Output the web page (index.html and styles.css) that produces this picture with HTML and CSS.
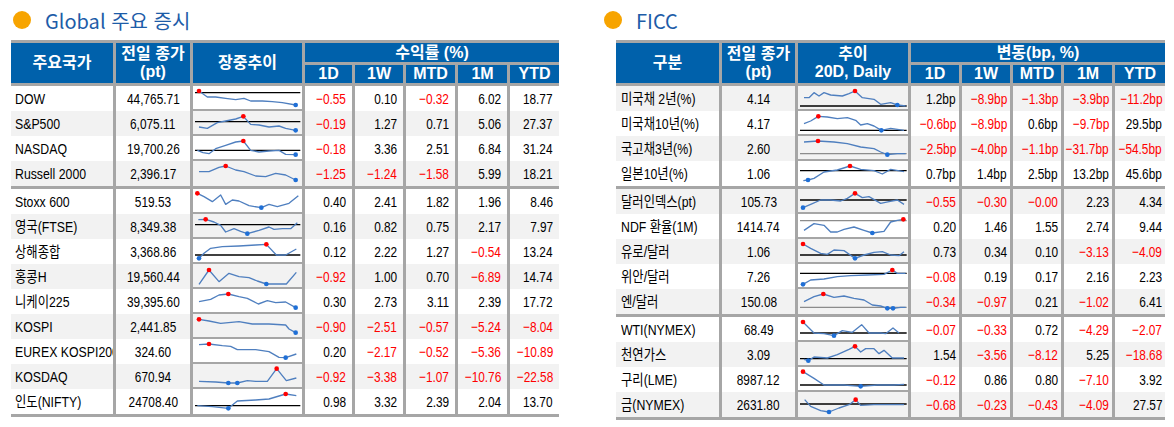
FILE: index.html
```html
<!DOCTYPE html>
<html lang="ko">
<head>
<meta charset="utf-8">
<title>Global 주요 증시 / FICC</title>
<link rel="stylesheet" href="styles.css">
</head>
<body>
<div class="page">
  <section class="panel panel-left">
    <div class="title"><span class="dot"></span><span>Global 주요 증시</span></div>
    <table class="tbl tbl-l">
      <colgroup><col class="c1"><col class="c2"><col class="c3"><col class="c4"><col class="c5"><col class="c6"><col class="c7"><col class="c8"></colgroup>
      <thead>
        <tr class="r1"><th rowspan="2" class="first">주요국가</th><th rowspan="2" class="two">전일 종가<br>(pt)</th><th rowspan="2">장중추이</th><th colspan="5">수익률 (%)</th></tr>
        <tr class="r2"><th>1D</th><th>1W</th><th>MTD</th><th>1M</th><th>YTD</th></tr>
      </thead>
      <tbody>
        <tr class="d"><td class="nm"><span class="v">DOW</span></td><td class="pv"><span class="v">44,765.71</span></td><td class="sp"><svg class="spark" viewBox="0 0 327 69" preserveAspectRatio="none"><line class="base" x1="6" y1="20" x2="322" y2="20"/><polyline class="ln" points="18,15 43,33 68,33 98,37 128,41 153,37 173,45 208,45 238,47 268,50 308,57"/><circle class="mx" cx="18" cy="15" r="7"/><circle class="mn" cx="308" cy="57" r="7"/></svg></td><td class="neg"><span class="v">−0.55</span></td><td><span class="v">0.10</span></td><td class="neg"><span class="v">−0.32</span></td><td><span class="v">6.02</span></td><td><span class="v">18.77</span></td></tr>
        <tr class="d alt"><td class="nm"><span class="v">S&amp;P500</span></td><td class="pv"><span class="v">6,075.11</span></td><td class="sp"><svg class="spark" viewBox="0 0 327 69" preserveAspectRatio="none"><line class="base" x1="6" y1="32" x2="322" y2="32"/><polyline class="ln" points="18,48 43,52 73,35 98,30 128,24 151,16 173,40 198,42 228,48 258,45 278,52 308,58"/><circle class="mx" cx="151" cy="16" r="7"/><circle class="mn" cx="308" cy="58" r="7"/></svg></td><td class="neg"><span class="v">−0.19</span></td><td><span class="v">1.27</span></td><td><span class="v">0.71</span></td><td><span class="v">5.06</span></td><td><span class="v">27.37</span></td></tr>
        <tr class="d"><td class="nm"><span class="v">NASDAQ</span></td><td class="pv"><span class="v">19,700.26</span></td><td class="sp"><svg class="spark" viewBox="0 0 327 69" preserveAspectRatio="none"><line class="base" x1="6" y1="43" x2="322" y2="43"/><polyline class="ln" points="13,43 30,50 48,53 68,38 98,28 128,18 151,15 173,43 198,48 228,45 258,43 278,55 308,56"/><circle class="mx" cx="151" cy="15" r="7"/><circle class="mn" cx="308" cy="56" r="7"/></svg></td><td class="neg"><span class="v">−0.18</span></td><td><span class="v">3.36</span></td><td><span class="v">2.51</span></td><td><span class="v">6.84</span></td><td><span class="v">31.24</span></td></tr>
        <tr class="d alt last"><td class="nm"><span class="v">Russell 2000</span></td><td class="pv"><span class="v">2,396.17</span></td><td class="sp"><svg class="spark" viewBox="0 0 327 69" preserveAspectRatio="none"><polyline class="ln" points="18,32 48,32 78,19 98,15 128,27 153,32 188,45 218,47 248,37 278,42 308,57"/><circle class="mx" cx="98" cy="15" r="7"/><circle class="mn" cx="308" cy="57" r="7"/></svg></td><td class="neg"><span class="v">−1.25</span></td><td class="neg"><span class="v">−1.24</span></td><td class="neg"><span class="v">−1.58</span></td><td><span class="v">5.99</span></td><td><span class="v">18.21</span></td></tr>
        <tr class="sep"><td colspan="8"></td></tr>
        <tr class="d"><td class="nm"><span class="v">Stoxx 600</span></td><td class="pv"><span class="v">519.53</span></td><td class="sp"><svg class="spark" viewBox="0 0 327 69" preserveAspectRatio="none"><polyline class="ln" points="13,13 33,23 58,38 83,18 98,46 118,33 138,36 168,50 205,56 228,46 253,53 288,43 316,20"/><circle class="mx" cx="13" cy="13" r="7"/><circle class="mn" cx="205" cy="56" r="7"/></svg></td><td><span class="v">0.40</span></td><td><span class="v">2.41</span></td><td><span class="v">1.82</span></td><td><span class="v">1.96</span></td><td><span class="v">8.46</span></td></tr>
        <tr class="d alt"><td class="nm"><span class="v">영국(FTSE)</span></td><td class="pv"><span class="v">8,349.38</span></td><td class="sp"><svg class="spark" viewBox="0 0 327 69" preserveAspectRatio="none"><line class="base" x1="6" y1="32" x2="322" y2="32"/><polyline class="ln" points="16,17 38,16 63,24 83,34 98,54 123,44 143,52 163,59 198,49 228,39 243,46 268,44 293,44 313,26"/><circle class="mx" cx="38" cy="16" r="7"/><circle class="mn" cx="163" cy="59" r="7"/></svg></td><td><span class="v">0.16</span></td><td><span class="v">0.82</span></td><td><span class="v">0.75</span></td><td><span class="v">2.17</span></td><td><span class="v">7.97</span></td></tr>
        <tr class="d"><td class="nm"><span class="v">상해종합</span></td><td class="pv"><span class="v">3,368.86</span></td><td class="sp"><svg class="spark" viewBox="0 0 327 69" preserveAspectRatio="none"><line class="base" x1="6" y1="48" x2="322" y2="48"/><polyline class="ln" points="18,58 33,43 53,28 88,23 138,21 188,18 220,16 250,48 278,48 310,30"/><circle class="mx" cx="220" cy="16" r="7"/><circle class="mn" cx="18" cy="58" r="7"/></svg></td><td><span class="v">0.12</span></td><td><span class="v">2.22</span></td><td><span class="v">1.27</span></td><td class="neg"><span class="v">−0.54</span></td><td><span class="v">13.24</span></td></tr>
        <tr class="d alt"><td class="nm"><span class="v">홍콩H</span></td><td class="pv"><span class="v">19,560.44</span></td><td class="sp"><svg class="spark" viewBox="0 0 327 69" preserveAspectRatio="none"><polyline class="ln" points="18,61 48,18 78,53 108,28 138,38 168,41 193,51 220,60 248,60 280,60 310,25"/><circle class="mx" cx="48" cy="18" r="7"/><circle class="mn" cx="220" cy="60" r="7"/></svg></td><td class="neg"><span class="v">−0.92</span></td><td><span class="v">1.00</span></td><td><span class="v">0.70</span></td><td class="neg"><span class="v">−6.89</span></td><td><span class="v">14.74</span></td></tr>
        <tr class="d"><td class="nm"><span class="v">니케이225</span></td><td class="pv"><span class="v">39,395.60</span></td><td class="sp"><svg class="spark" viewBox="0 0 327 69" preserveAspectRatio="none"><polyline class="ln" points="18,38 53,31 78,18 106,15 138,23 163,28 196,45 223,35 248,41 278,39 308,56"/><circle class="mx" cx="106" cy="15" r="7"/><circle class="mn" cx="308" cy="56" r="7"/></svg></td><td><span class="v">0.30</span></td><td><span class="v">2.73</span></td><td><span class="v">3.11</span></td><td><span class="v">2.39</span></td><td><span class="v">17.72</span></td></tr>
        <tr class="d alt"><td class="nm"><span class="v">KOSPI</span></td><td class="pv"><span class="v">2,441.85</span></td><td class="sp"><svg class="spark" viewBox="0 0 327 69" preserveAspectRatio="none"><polyline class="ln" points="18,16 48,21 83,28 138,23 178,30 228,30 278,33 288,45 308,56"/><circle class="mx" cx="18" cy="16" r="7"/><circle class="mn" cx="308" cy="56" r="7"/></svg></td><td class="neg"><span class="v">−0.90</span></td><td class="neg"><span class="v">−2.51</span></td><td class="neg"><span class="v">−0.57</span></td><td class="neg"><span class="v">−5.24</span></td><td class="neg"><span class="v">−8.04</span></td></tr>
        <tr class="d"><td class="nm wide"><span class="v">EUREX KOSPI200</span></td><td class="pv"><span class="v">324.60</span></td><td class="sp"><svg class="spark" viewBox="0 0 327 69" preserveAspectRatio="none"><polyline class="ln" points="18,17 48,15 88,20 113,22 133,32 188,32 228,38 258,55 278,56 310,45"/><circle class="mx" cx="48" cy="15" r="7"/><circle class="mn" cx="278" cy="56" r="7"/></svg></td><td><span class="v">0.20</span></td><td class="neg"><span class="v">−2.17</span></td><td class="neg"><span class="v">−0.52</span></td><td class="neg"><span class="v">−5.36</span></td><td class="neg"><span class="v">−10.89</span></td></tr>
        <tr class="d alt"><td class="nm"><span class="v">KOSDAQ</span></td><td class="pv"><span class="v">670.94</span></td><td class="sp"><svg class="spark" viewBox="0 0 327 69" preserveAspectRatio="none"><polyline class="ln" points="18,52 68,54 106,57 133,57 163,50 188,52 223,52 251,14 280,50 310,42"/><circle class="mx" cx="251" cy="14" r="7"/><circle class="mn" cx="106" cy="57" r="7"/><circle class="mn" cx="133" cy="57" r="7"/></svg></td><td class="neg"><span class="v">−0.92</span></td><td class="neg"><span class="v">−3.38</span></td><td class="neg"><span class="v">−1.07</span></td><td class="neg"><span class="v">−10.76</span></td><td class="neg"><span class="v">−22.58</span></td></tr>
        <tr class="d last"><td class="nm"><span class="v">인도(NIFTY)</span></td><td class="pv"><span class="v">24708.40</span></td><td class="sp"><svg class="spark" viewBox="0 0 327 69" preserveAspectRatio="none"><line class="base" x1="6" y1="50" x2="322" y2="50"/><polyline class="ln" points="13,50 58,53 106,58 133,36 188,33 228,30 278,15 310,20"/><circle class="mx" cx="278" cy="15" r="7"/><circle class="mn" cx="106" cy="58" r="7"/></svg></td><td><span class="v">0.98</span></td><td><span class="v">3.32</span></td><td><span class="v">2.39</span></td><td><span class="v">2.04</span></td><td><span class="v">13.70</span></td></tr>
      </tbody>
    </table>
  </section>

  <section class="panel panel-right">
    <div class="title"><span class="dot"></span><span>FICC</span></div>
    <table class="tbl tbl-r">
      <colgroup><col class="c1"><col class="c2"><col class="c3"><col class="c4"><col class="c5"><col class="c6"><col class="c7"><col class="c8"></colgroup>
      <thead>
        <tr class="r1"><th rowspan="2" class="first">구분</th><th rowspan="2" class="two">전일 종가<br>(pt)</th><th rowspan="2" class="two">추이<br>20D, Daily</th><th colspan="5">변동(bp, %)</th></tr>
        <tr class="r2"><th>1D</th><th>1W</th><th>MTD</th><th>1M</th><th>YTD</th></tr>
      </thead>
      <tbody>
        <tr class="d alt"><td class="nm"><span class="v">미국채 2년(%)</span></td><td class="pv"><span class="v">4.14</span></td><td class="sp"><svg class="spark" viewBox="0 0 330 69" preserveAspectRatio="none"><line class="base" x1="6" y1="60" x2="326" y2="60"/><polyline class="ln" points="18,35 33,35 48,20 63,30 78,20 98,27 133,30 153,23 171,15 193,35 228,40 248,55 278,50 298,57 323,60"/><circle class="mx" cx="171" cy="15" r="7"/><circle class="mn" cx="298" cy="57" r="7"/></svg></td><td><span class="v">1.2bp</span></td><td class="neg"><span class="v">−8.9bp</span></td><td class="neg"><span class="v">−1.3bp</span></td><td class="neg"><span class="v">−3.9bp</span></td><td class="neg"><span class="v">−11.2bp</span></td></tr>
        <tr class="d"><td class="nm"><span class="v">미국채10년(%)</span></td><td class="pv"><span class="v">4.17</span></td><td class="sp"><svg class="spark" viewBox="0 0 330 69" preserveAspectRatio="none"><line class="base" x1="6" y1="58" x2="326" y2="58"/><polyline class="ln" points="18,38 38,30 61,16 88,18 118,23 148,20 173,28 188,42 208,38 228,45 250,58 278,52 318,58"/><circle class="mx" cx="61" cy="16" r="7"/><circle class="mn" cx="250" cy="58" r="7"/></svg></td><td class="neg"><span class="v">−0.6bp</span></td><td class="neg"><span class="v">−8.9bp</span></td><td><span class="v">0.6bp</span></td><td class="neg"><span class="v">−9.7bp</span></td><td><span class="v">29.5bp</span></td></tr>
        <tr class="d alt"><td class="nm"><span class="v">국고채3년(%)</span></td><td class="pv"><span class="v">2.60</span></td><td class="sp"><svg class="spark" viewBox="0 0 330 69" preserveAspectRatio="none"><line class="base gray" x1="6" y1="53" x2="326" y2="53"/><polyline class="ln" points="18,18 60,15 108,18 148,23 188,33 228,38 248,48 268,56 298,53 323,53"/><circle class="mx" cx="60" cy="15" r="7"/><circle class="mn" cx="268" cy="56" r="7"/></svg></td><td class="neg"><span class="v">−2.5bp</span></td><td class="neg"><span class="v">−4.0bp</span></td><td class="neg"><span class="v">−1.1bp</span></td><td class="neg"><span class="v">−31.7bp</span></td><td class="neg"><span class="v">−54.5bp</span></td></tr>
        <tr class="d last"><td class="nm"><span class="v">일본10년(%)</span></td><td class="pv"><span class="v">1.06</span></td><td class="sp"><svg class="spark" viewBox="0 0 330 69" preserveAspectRatio="none"><line class="base" x1="6" y1="29" x2="326" y2="29"/><polyline class="ln" points="16,59 30,57 48,52 78,33 118,27 156,15 188,25 228,29 253,39 278,25 318,32"/><circle class="mx" cx="156" cy="15" r="7"/><circle class="mn" cx="30" cy="57" r="7"/></svg></td><td><span class="v">0.7bp</span></td><td><span class="v">1.4bp</span></td><td><span class="v">2.5bp</span></td><td><span class="v">13.2bp</span></td><td><span class="v">45.6bp</span></td></tr>
        <tr class="sep"><td colspan="8"></td></tr>
        <tr class="d alt"><td class="nm"><span class="v">달러인덱스(pt)</span></td><td class="pv"><span class="v">105.73</span></td><td class="sp"><svg class="spark" viewBox="0 0 330 69" preserveAspectRatio="none"><line class="base" x1="6" y1="33" x2="326" y2="33"/><polyline class="ln" points="15,56 38,46 68,33 98,33 128,36 148,28 171,13 193,26 213,23 248,43 273,38 298,33 318,46"/><circle class="mx" cx="171" cy="13" r="7"/><circle class="mn" cx="15" cy="56" r="7"/></svg></td><td class="neg"><span class="v">−0.55</span></td><td class="neg"><span class="v">−0.30</span></td><td class="neg"><span class="v">−0.00</span></td><td><span class="v">2.23</span></td><td><span class="v">4.34</span></td></tr>
        <tr class="d"><td class="nm"><span class="v">NDF 환율(1M)</span></td><td class="pv"><span class="v">1414.74</span></td><td class="sp"><svg class="spark" viewBox="0 0 330 69" preserveAspectRatio="none"><line class="base gray" x1="6" y1="20" x2="326" y2="20"/><polyline class="ln" points="18,49 48,29 78,34 98,54 118,54 138,46 168,39 198,49 223,57 258,52 278,24 298,19 316,16"/><circle class="mx" cx="316" cy="16" r="7"/><circle class="mn" cx="223" cy="57" r="7"/></svg></td><td><span class="v">0.20</span></td><td><span class="v">1.46</span></td><td><span class="v">1.55</span></td><td><span class="v">2.74</span></td><td><span class="v">9.44</span></td></tr>
        <tr class="d alt"><td class="nm"><span class="v">유로/달러</span></td><td class="pv"><span class="v">1.06</span></td><td class="sp"><svg class="spark" viewBox="0 0 330 69" preserveAspectRatio="none"><line class="base" x1="6" y1="48" x2="326" y2="48"/><polyline class="ln" points="15,15 38,28 68,43 88,46 108,33 138,35 171,58 198,48 228,40 253,38 278,48 303,50 318,38"/><circle class="mx" cx="15" cy="15" r="7"/><circle class="mn" cx="171" cy="58" r="7"/></svg></td><td><span class="v">0.73</span></td><td><span class="v">0.34</span></td><td><span class="v">0.10</span></td><td class="neg"><span class="v">−3.13</span></td><td class="neg"><span class="v">−4.09</span></td></tr>
        <tr class="d"><td class="nm"><span class="v">위안/달러</span></td><td class="pv"><span class="v">7.26</span></td><td class="sp"><svg class="spark" viewBox="0 0 330 69" preserveAspectRatio="none"><line class="base" x1="6" y1="28" x2="326" y2="28"/><polyline class="ln" points="15,61 38,48 78,45 118,38 158,35 208,33 258,31 283,18 298,28 323,28"/><circle class="mx" cx="283" cy="18" r="7"/><circle class="mn" cx="15" cy="61" r="7"/></svg></td><td class="neg"><span class="v">−0.08</span></td><td><span class="v">0.19</span></td><td><span class="v">0.17</span></td><td><span class="v">2.16</span></td><td><span class="v">2.23</span></td></tr>
        <tr class="d alt last"><td class="nm"><span class="v">엔/달러</span></td><td class="pv"><span class="v">150.08</span></td><td class="sp"><svg class="spark" viewBox="0 0 330 69" preserveAspectRatio="none"><line class="base gray" x1="6" y1="55" x2="326" y2="55"/><polyline class="ln" points="18,38 48,23 76,15 108,25 138,21 168,28 198,33 223,48 248,51 268,58 285,58 308,55 323,55"/><circle class="mx" cx="76" cy="15" r="7"/><circle class="mn" cx="268" cy="58" r="7"/><circle class="mn" cx="285" cy="58" r="7"/></svg></td><td class="neg"><span class="v">−0.34</span></td><td class="neg"><span class="v">−0.97</span></td><td><span class="v">0.21</span></td><td class="neg"><span class="v">−1.02</span></td><td><span class="v">6.41</span></td></tr>
        <tr class="sep"><td colspan="8"></td></tr>
        <tr class="d"><td class="nm"><span class="v">WTI(NYMEX)</span></td><td class="pv"><span class="v">68.49</span></td><td class="sp"><svg class="spark" viewBox="0 0 330 69" preserveAspectRatio="none"><line class="base" x1="6" y1="48" x2="326" y2="48"/><polyline class="ln" points="15,15 48,48 78,50 108,56 133,41 163,46 191,23 213,48 248,48 263,50 285,33 303,48"/><circle class="mx" cx="15" cy="15" r="7"/><circle class="mn" cx="108" cy="56" r="7"/></svg></td><td class="neg"><span class="v">−0.07</span></td><td class="neg"><span class="v">−0.33</span></td><td><span class="v">0.72</span></td><td class="neg"><span class="v">−4.29</span></td><td class="neg"><span class="v">−2.07</span></td></tr>
        <tr class="d alt"><td class="nm"><span class="v">천연가스</span></td><td class="pv"><span class="v">3.09</span></td><td class="sp"><svg class="spark" viewBox="0 0 330 69" preserveAspectRatio="none"><line class="base" x1="6" y1="50" x2="326" y2="50"/><polyline class="ln" points="18,52 31,56 48,45 88,48 118,38 153,22 171,13 188,30 203,20 228,20 243,35 258,25 283,48 318,48"/><circle class="mx" cx="171" cy="13" r="7"/><circle class="mn" cx="31" cy="56" r="7"/></svg></td><td><span class="v">1.54</span></td><td class="neg"><span class="v">−3.56</span></td><td class="neg"><span class="v">−8.12</span></td><td><span class="v">5.25</span></td><td class="neg"><span class="v">−18.68</span></td></tr>
        <tr class="d"><td class="nm"><span class="v">구리(LME)</span></td><td class="pv"><span class="v">8987.12</span></td><td class="sp"><svg class="spark" viewBox="0 0 330 69" preserveAspectRatio="none"><line class="base" x1="6" y1="54" x2="326" y2="54"/><polyline class="ln" points="15,14 48,34 78,54 138,54 188,58 238,54 288,54 318,52"/><circle class="mx" cx="15" cy="14" r="7"/><circle class="mn" cx="188" cy="58" r="7"/></svg></td><td class="neg"><span class="v">−0.12</span></td><td><span class="v">0.86</span></td><td><span class="v">0.80</span></td><td class="neg"><span class="v">−7.10</span></td><td><span class="v">3.92</span></td></tr>
        <tr class="d alt last"><td class="nm"><span class="v">금(NYMEX)</span></td><td class="pv"><span class="v">2631.80</span></td><td class="sp"><svg class="spark" viewBox="0 0 330 69" preserveAspectRatio="none"><line class="base" x1="6" y1="36" x2="326" y2="36"/><polyline class="ln" points="20,23 38,43 68,56 93,60 123,48 153,38 173,23 188,40 228,38 268,38 318,38"/><circle class="mx" cx="173" cy="23" r="7"/><circle class="mn" cx="93" cy="60" r="7"/></svg></td><td class="neg"><span class="v">−0.68</span></td><td class="neg"><span class="v">−0.23</span></td><td class="neg"><span class="v">−0.43</span></td><td class="neg"><span class="v">−4.09</span></td><td><span class="v">27.57</span></td></tr>
      </tbody>
    </table>
  </section>
</div>
</body>
</html>
```

FILE: styles.css
```css
* { box-sizing: border-box; }

body {
  margin: 0;
  background: #ffffff;
  color: #000000;
  font-family: "Liberation Sans", "Noto Sans CJK KR", sans-serif;
}

.page {
  display: flex;
  align-items: flex-start;
}

.panel-left { margin-left: 11px; width: 548px; }
.panel-right { margin-left: 45px; width: 561px; }

.title {
  height: 40px;
  display: flex;
  align-items: center;
  gap: 14px;
  padding-left: 2px;
  font-family: "Noto Sans CJK KR", sans-serif;
  font-size: 20px;
  color: #1d5ca8;
}
.panel-right .title { padding-left: 0; }

.dot {
  flex: none;
  width: 18px;
  height: 18px;
  border-radius: 50%;
  background: #f7a400;
}

.tbl {
  border-collapse: separate;
  border-spacing: 0;
  table-layout: fixed;
  border-top: 3px solid #a6a6a6;
  border-bottom: 3px solid #a6a6a6;
}
.tbl-l { width: 548px; }
.tbl-r { width: 549px; margin-left: 12px; }

.tbl-l .c1 { width: 102px; }
.tbl-l .c2 { width: 77px; }
.tbl-l .c3 { width: 112px; }
.tbl-l .c4 { width: 50px; }
.tbl-l .c5 { width: 51px; }
.tbl-l .c6 { width: 52px; }
.tbl-l .c7 { width: 52px; }
.tbl-l .c8 { width: 52px; }

.tbl-r .c1 { width: 103px; }
.tbl-r .c2 { width: 76px; }
.tbl-r .c3 { width: 113px; }
.tbl-r .c4 { width: 51px; }
.tbl-r .c5 { width: 51px; }
.tbl-r .c6 { width: 51px; }
.tbl-r .c7 { width: 51px; }
.tbl-r .c8 { width: 53px; }

/* header */
.tbl th {
  background: #0061ab;
  color: #ffffff;
  font-weight: bold;
  font-size: 16px;
  line-height: 18px;
  padding: 0;
  text-align: center;
  vertical-align: middle;
  white-space: nowrap;
  border-left: 3px solid #a6a6a6;
  border-bottom: 3px solid #a6a6a6;
}
.tbl th.first { border-left: 0; }
.tbl tr.r1 { height: 22px; }
.tbl tr.r2 { height: 21px; }

/* body */
.tbl tr.d { height: 25px; }
.tbl td {
  padding: 0 6px 0 0;
  font-size: 15px;
  line-height: 20px;
  text-align: right;
  vertical-align: middle;
  white-space: nowrap;
  overflow: hidden;
  border-left: 3px solid #a6a6a6;
}
.tbl-r td { padding-right: 3px; }

.tbl tr.alt td { background: #f2f2f2; }

.tbl td.nm {
  border-left: 0;
  padding: 0 0 0 4px;
  text-align: left;
}
.tbl-r td.nm { padding-left: 5px; }

.tbl td.pv {
  padding: 0;
  text-align: center;
}

.tbl td.sp {
  padding: 0;
  vertical-align: top;
  border-bottom: 2px solid #a6a6a6;
}
.tbl tr.last td.sp { border-bottom: 0; }

.tbl tr.sep td {
  height: 3px;
  padding: 0;
  border: 0;
  background: #a6a6a6;
  font-size: 0;
  line-height: 0;
}

.neg { color: #ff0000; }

/* condensed rendering of report digits */
.v {
  display: inline-block;
  margin-left: -40px;
  transform: scaleX(0.79);
  transform-origin: 100% 50%;
}
.pv .v {
  margin-left: 0;
  transform-origin: 50% 50%;
}
.nm .v {
  margin-left: 0;
  transform: scaleX(0.82);
  transform-origin: 0 50%;
}

/* sparklines */
.spark {
  display: block;
  width: 100%;
  height: 23px;
}
.spark .ln {
  fill: none;
  stroke: #4f7fbf;
  stroke-width: 4;
  stroke-linejoin: round;
}
.spark .base {
  stroke: #000000;
  stroke-width: 4;
}
.spark .base.gray { stroke: #8c8c8c; }
.spark .mx { fill: #ff0000; }
.spark .mn { fill: #1f6fd6; }
```
